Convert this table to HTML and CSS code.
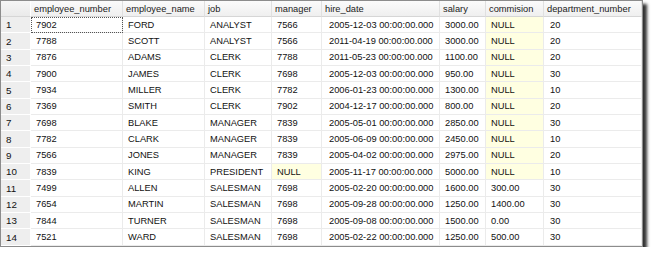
FILE: index.html
```html
<!DOCTYPE html>
<html lang="en">
<head>
    <meta charset="UTF-8">
    <title>Results</title>
    <link rel="stylesheet" href="styles.css">
</head>
<body>
    <div class="frame">
        <table class="grid">
            <thead>
                <tr>
                    <th class="rownum c0"></th>
                    <th class="c1">employee_number</th>
                    <th class="c2">employee_name</th>
                    <th class="c3">job</th>
                    <th class="c4">manager</th>
                    <th class="c5">hire_date</th>
                    <th class="c6">salary</th>
                    <th class="c7">commision</th>
                    <th class="c8">department_number</th>
                </tr>
            </thead>
            <tbody>
                <tr><td class="rownum">1</td><td class="focus">7902</td><td>FORD</td><td>ANALYST</td><td>7566</td><td class="date">2005-12-03 00:00:00.000</td><td>3000.00</td><td class="null">NULL</td><td class="dept">20</td></tr>
                <tr><td class="rownum">2</td><td>7788</td><td>SCOTT</td><td>ANALYST</td><td>7566</td><td class="date">2011-04-19 00:00:00.000</td><td>3000.00</td><td class="null">NULL</td><td class="dept">20</td></tr>
                <tr><td class="rownum">3</td><td>7876</td><td>ADAMS</td><td>CLERK</td><td>7788</td><td class="date">2011-05-23 00:00:00.000</td><td>1100.00</td><td class="null">NULL</td><td class="dept">20</td></tr>
                <tr><td class="rownum">4</td><td>7900</td><td>JAMES</td><td>CLERK</td><td>7698</td><td class="date">2005-12-03 00:00:00.000</td><td>950.00</td><td class="null">NULL</td><td class="dept">30</td></tr>
                <tr><td class="rownum">5</td><td>7934</td><td>MILLER</td><td>CLERK</td><td>7782</td><td class="date">2006-01-23 00:00:00.000</td><td>1300.00</td><td class="null">NULL</td><td class="dept">10</td></tr>
                <tr><td class="rownum">6</td><td>7369</td><td>SMITH</td><td>CLERK</td><td>7902</td><td class="date">2004-12-17 00:00:00.000</td><td>800.00</td><td class="null">NULL</td><td class="dept">20</td></tr>
                <tr><td class="rownum">7</td><td>7698</td><td>BLAKE</td><td>MANAGER</td><td>7839</td><td class="date">2005-05-01 00:00:00.000</td><td>2850.00</td><td class="null">NULL</td><td class="dept">30</td></tr>
                <tr><td class="rownum">8</td><td>7782</td><td>CLARK</td><td>MANAGER</td><td>7839</td><td class="date">2005-06-09 00:00:00.000</td><td>2450.00</td><td class="null">NULL</td><td class="dept">10</td></tr>
                <tr><td class="rownum">9</td><td>7566</td><td>JONES</td><td>MANAGER</td><td>7839</td><td class="date">2005-04-02 00:00:00.000</td><td>2975.00</td><td class="null">NULL</td><td class="dept">20</td></tr>
                <tr><td class="rownum">10</td><td>7839</td><td>KING</td><td>PRESIDENT</td><td class="null">NULL</td><td class="date">2005-11-17 00:00:00.000</td><td>5000.00</td><td class="null">NULL</td><td class="dept">10</td></tr>
                <tr><td class="rownum">11</td><td>7499</td><td>ALLEN</td><td>SALESMAN</td><td>7698</td><td class="date">2005-02-20 00:00:00.000</td><td>1600.00</td><td>300.00</td><td class="dept">30</td></tr>
                <tr><td class="rownum">12</td><td>7654</td><td>MARTIN</td><td>SALESMAN</td><td>7698</td><td class="date">2005-09-28 00:00:00.000</td><td>1250.00</td><td>1400.00</td><td class="dept">30</td></tr>
                <tr><td class="rownum">13</td><td>7844</td><td>TURNER</td><td>SALESMAN</td><td>7698</td><td class="date">2005-09-08 00:00:00.000</td><td>1500.00</td><td>0.00</td><td class="dept">30</td></tr>
                <tr><td class="rownum">14</td><td>7521</td><td>WARD</td><td>SALESMAN</td><td>7698</td><td class="date">2005-02-22 00:00:00.000</td><td>1250.00</td><td>500.00</td><td class="dept">30</td></tr>
            </tbody>
        </table>
    </div>
</body>
</html>
```

FILE: styles.css
```css
body {
    margin: 0;
    padding: 0;
    background: #ffffff;
    font-family: "Liberation Sans", Arial, sans-serif;
    font-size: 9.3px;
    color: #111111;
}
.frame {
    width: 641px;
    border: 1px solid #8c8c8c;
    background: #ffffff;
    box-shadow: 4px 4px 3px rgba(0, 0, 0, 0.8);
}
.grid {
    width: 641px;
    table-layout: fixed;
    border-collapse: separate;
    border-spacing: 0;
}
.grid th, .grid td {
    box-sizing: border-box;
    padding: 0 0 0 4px;
    text-align: left;
    font-weight: normal;
    white-space: nowrap;
    overflow: hidden;
    border-right: 1px solid #ebebeb;
    border-bottom: 1px solid #ebebeb;
}
.grid th {
    height: 16px;
    padding-left: 3px;
    color: #222222;
    background: linear-gradient(#fbfbfb, #efefef);
    border-right: 1px solid #e0e0e0;
    border-bottom: 1px solid #d6d6d6;
}
.grid td {
    height: 16.35px;
    padding-left: 5px;
}
.c0 { width: 30px; }
.c1 { width: 92px; }
.c2 { width: 82px; }
.c3 { width: 67px; }
.c4 { width: 50px; }
.c5 { width: 118px; }
.c6 { width: 46px; }
.c7 { width: 58px; }
.c8 { width: 98px; }
.grid .rownum {
    background: #eeeeee;
    border-right: 1px solid #ffffff;
    border-bottom: 1px solid #ffffff;
    padding-left: 5px;
    font-size: 9.8px;
}
.grid th.rownum {
    background: linear-gradient(#f6f6f6, #eaeaea);
    border-bottom: 1px solid #d6d6d6;
}
.grid td.date {
    padding-left: 7px;
}
.grid td.dept {
    padding-left: 6px;
}
.grid td.null {
    background: #ffffe1;
}
.grid td.focus {
    outline: 1px dotted #555555;
    outline-offset: -1px;
}
```
